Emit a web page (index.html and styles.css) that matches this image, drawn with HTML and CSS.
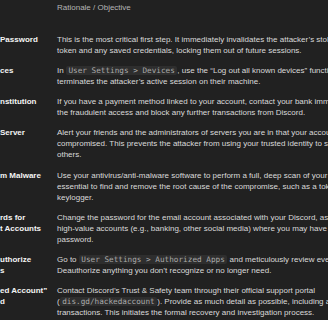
FILE: index.html
```html
<!DOCTYPE html>
<html lang="en">
<head>
  <meta charset="UTF-8" />
  <meta name="viewport" content="width=device-width, initial-scale=1.0"/>
  <title>Account Recovery Steps</title>
  <link rel="stylesheet" href="styles.css">
</head>
<body>
  <div class="table-wrap">
    <table class="steps">
      <colgroup>
        <col class="col-step">
        <col class="col-why">
      </colgroup>
      <thead>
        <tr>
          <th></th>
          <th>Rationale / Objective</th>
        </tr>
      </thead>
      <tbody>
        <tr>
          <td class="step">Password</td>
          <td>This is the most critical first step. It immediately invalidates the attacker’s stolen token and any saved credentials, locking them out of future sessions.</td>
        </tr>
        <tr>
          <td class="step">ces</td>
          <td>In <code>User Settings &gt; Devices</code>, use the “Log out all known devices” function. This terminates the attacker’s active session on their machine.</td>
        </tr>
        <tr>
          <td class="step">nstitution</td>
          <td>If you have a payment method linked to your account, contact your bank immediately the fraudulent access and block any further transactions from Discord.</td>
        </tr>
        <tr>
          <td class="step">Server</td>
          <td>Alert your friends and the administrators of servers you are in that your account was compromised. This prevents the attacker from using your trusted identity to scam others.</td>
        </tr>
        <tr>
          <td class="step">m Malware</td>
          <td>Use your antivirus/anti-malware software to perform a full, deep scan of your PC. It’s essential to find and remove the root cause of the compromise, such as a token or keylogger.</td>
        </tr>
        <tr>
          <td class="step">rds for<br>t Accounts</td>
          <td>Change the password for the email account associated with your Discord, as well as high-value accounts (e.g., banking, other social media) where you may have reused password.</td>
        </tr>
        <tr>
          <td class="step">uthorize<br>s</td>
          <td>Go to <code>User Settings &gt; Authorized Apps</code> and meticulously review every app. Deauthorize anything you don’t recognize or no longer need.</td>
        </tr>
        <tr>
          <td class="step">ed Account”<br>d</td>
          <td>Contact Discord’s Trust &amp; Safety team through their official support portal (<code>dis.gd/hackedaccount</code>). Provide as much detail as possible, including any transactions. This initiates the formal recovery and investigation process.</td>
        </tr>
      </tbody>
    </table>
  </div>
</body>
</html>
```

FILE: styles.css
```css
:root {
  --fondo: #212121;
  --texto: #dadada;
  --titulo: #f4f4f4;
  --cabecera: #b5b5b5;
  --code-bg: #2e2e2e;
  --code-texto: #a9a9a9;
}

body {
  margin: 0;
  overflow: hidden;
  background: var(--fondo);
  color: var(--texto);
  font-family: 'Liberation Sans', Arial, sans-serif;
  font-size: 8px;
  line-height: 11px;
}

.table-wrap {
  overflow: hidden;
}

.steps {
  border-collapse: collapse;
  table-layout: fixed;
  width: 358.5px;
}

.col-step {
  width: 57px;
}

.col-why {
  width: 301.5px;
}

.steps th {
  text-align: left;
  font-weight: normal;
  color: var(--cabecera);
  padding: 2px 0 16.3px;
}

.steps td {
  vertical-align: top;
  padding: 4.6px 0;
}

.steps td.step {
  padding-right: 7px;
  font-weight: bold;
  color: var(--titulo);
}

code {
  font-family: 'DejaVu Sans Mono', 'Liberation Mono', monospace;
  font-size: 7.7px;
  background: var(--code-bg);
  color: var(--code-texto);
  padding: 0 2.5px;
  border-radius: 2px;
}
```
